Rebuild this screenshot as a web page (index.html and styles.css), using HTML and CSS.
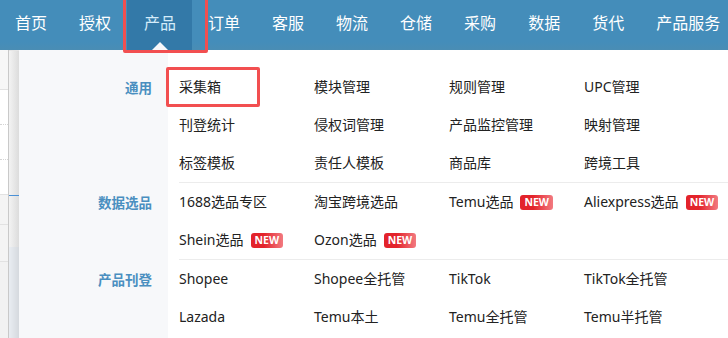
FILE: index.html
```html
<!DOCTYPE html>
<html lang="zh">

<head>
    <meta charset="utf-8">
    <meta name="viewport" content="width=device-width, initial-scale=1.0">
    <title>产品菜单</title>
    <link rel="stylesheet" href="styles.css">
</head>

<body>
    <nav class="topnav">
        <a class="nav-item">首页</a>
        <a class="nav-item">授权</a>
        <a class="nav-item active">产品</a>
        <a class="nav-item">订单</a>
        <a class="nav-item">客服</a>
        <a class="nav-item">物流</a>
        <a class="nav-item">仓储</a>
        <a class="nav-item">采购</a>
        <a class="nav-item">数据</a>
        <a class="nav-item">货代</a>
        <a class="nav-item">产品服务</a>
    </nav>

    <!-- page behind the dropdown, only a sliver shows -->
    <main class="page">
        <div class="page-side">
            <div class="row r1"></div>
            <div class="row r2"><span class="dots"></span><span class="dots"></span></div>
            <div class="row r3"></div>
            <div class="row r4"></div>
            <div class="row r5"></div>
        </div>
        <div class="page-edge">
            <div class="edge-top"><span class="edge-line"></span></div>
            <div class="edge-bottom"></div>
        </div>
    </main>

    <section class="dropdown">
        <div class="group">
            <div class="group-label">通用</div>
            <div class="group-items">
                <a class="item">采集箱</a>
                <a class="item">模块管理</a>
                <a class="item">规则管理</a>
                <a class="item">UPC管理</a>
                <a class="item">刊登统计</a>
                <a class="item">侵权词管理</a>
                <a class="item">产品监控管理</a>
                <a class="item">映射管理</a>
                <a class="item">标签模板</a>
                <a class="item">责任人模板</a>
                <a class="item">商品库</a>
                <a class="item">跨境工具</a>
            </div>
        </div>
        <div class="group">
            <div class="group-label">数据选品</div>
            <div class="group-items">
                <a class="item">1688选品专区</a>
                <a class="item">淘宝跨境选品</a>
                <a class="item">Temu选品<span class="badge">NEW</span></a>
                <a class="item">Aliexpress选品<span class="badge">NEW</span></a>
                <a class="item">Shein选品<span class="badge">NEW</span></a>
                <a class="item">Ozon选品<span class="badge">NEW</span></a>
            </div>
        </div>
        <div class="group">
            <div class="group-label">产品刊登</div>
            <div class="group-items">
                <a class="item">Shopee</a>
                <a class="item">Shopee全托管</a>
                <a class="item">TikTok</a>
                <a class="item">TikTok全托管</a>
                <a class="item">Lazada</a>
                <a class="item">Temu本土</a>
                <a class="item">Temu全托管</a>
                <a class="item">Temu半托管</a>
            </div>
        </div>
    </section>

    <!-- red annotation boxes -->
    <div class="mark mark-nav"></div>
    <div class="mark mark-item"></div>
</body>

</html>
```

FILE: styles.css
```css
body {
    margin: 0;
    background-color: #fff;
    font-family: "Noto Sans", "Noto Sans CJK SC", sans-serif;
    overflow: hidden;
    height: 338px;
}

.topnav {
    display: flex;
    height: 50px;
    background: linear-gradient(to bottom, #448dba 0, #448dba 42px, #4a8db4 50px);
}

.nav-item {
    position: relative;
    flex-shrink: 0;
    white-space: nowrap;
    padding: 0 16px;
    line-height: 45px;
    font-size: 16px;
    color: #fff;
    font-family: "Noto Sans CJK SC", sans-serif;
}

.nav-item:first-child {
    padding-left: 15px;
}

.nav-item.active {
    background-color: #3379a8;
    color: #d4ecfa;
    padding: 0 16px 0 17px;
}

.nav-item.active::after {
    content: "";
    position: absolute;
    left: 50%;
    bottom: 0;
    margin-left: -8px;
    border-left: 8px solid transparent;
    border-right: 8px solid transparent;
    border-bottom: 8px solid #f7f8fa;
}

/* background page */
.page {
    display: flex;
    height: 288px;
}

.page-side {
    width: 8px;
    border-right: 1px solid #c9c9c9;
}

.row {
    border-bottom: 1px solid #e2e2e2;
}

.r1 {
    height: 39px;
    background-color: #f7f7f7;
}

.r2 {
    height: 104px;
    background-color: #fff;
    display: flex;
    flex-direction: column;
    justify-content: space-evenly;
}

.dots {
    display: block;
    border-top: 1px dotted #d5d5d5;
}

.r3 {
    height: 29px;
    background-color: #f4f4f4;
}

.r4 {
    height: 36px;
    background-color: #f4f4f4;
}

.r5 {
    height: 76px;
    background-color: #f2f2f2;
    border-bottom: none;
}

.page-edge {
    width: 10px;
    display: flex;
    flex-direction: column;
}

.edge-top {
    height: 196px;
    background: linear-gradient(to right, #f3f3f3, #dcdcdc);
    display: flex;
    flex-direction: column;
    justify-content: flex-end;
    border-top: 1px solid #e6e6e6;
}

.edge-line {
    height: 1px;
    background-color: #4a90d6;
    margin-bottom: 51px;
}

.edge-bottom {
    flex: 1;
    background: linear-gradient(to right, #e9edf2, #d5d9de);
}

/* dropdown panel */
.dropdown {
    position: absolute;
    top: 50px;
    left: 19px;
    right: 0;
    bottom: 0;
    padding-top: 18px;
    background: linear-gradient(to right, #f7f8fa 149px, #fff 149px);
}

.group {
    display: flex;
}

.group-label {
    width: 133px;
    padding-right: 16px;
    text-align: right;
    line-height: 38px;
    font-size: 13.5px;
    font-weight: bold;
    color: #4a8fc0;
    font-family: "Noto Sans CJK SC", sans-serif;
}

.group-items {
    flex: 1;
    margin-left: 11px;
    display: grid;
    grid-template-columns: repeat(4, 135px);
    border-bottom: 1px solid #ececec;
}

.group:last-child .group-items {
    border-bottom: none;
}

.item {
    line-height: 38px;
    font-size: 14px;
    color: #222;
    white-space: nowrap;
}

.badge {
    display: inline-block;
    margin-left: 7px;
    padding: 0 4px;
    height: 15px;
    line-height: 15px;
    font-size: 10.5px;
    font-weight: bold;
    color: #fff;
    border-radius: 3px;
    vertical-align: 1px;
    background: linear-gradient(to right, #e3232b 40%, #f27a80);
}

/* annotations */
.mark {
    position: absolute;
    border: 3px solid #f24f50;
    border-radius: 2px;
}

.mark-nav {
    left: 123px;
    top: -3px;
    width: 79px;
    height: 50px;
}

.mark-item {
    left: 166px;
    top: 67px;
    width: 88px;
    height: 34px;
}
```
